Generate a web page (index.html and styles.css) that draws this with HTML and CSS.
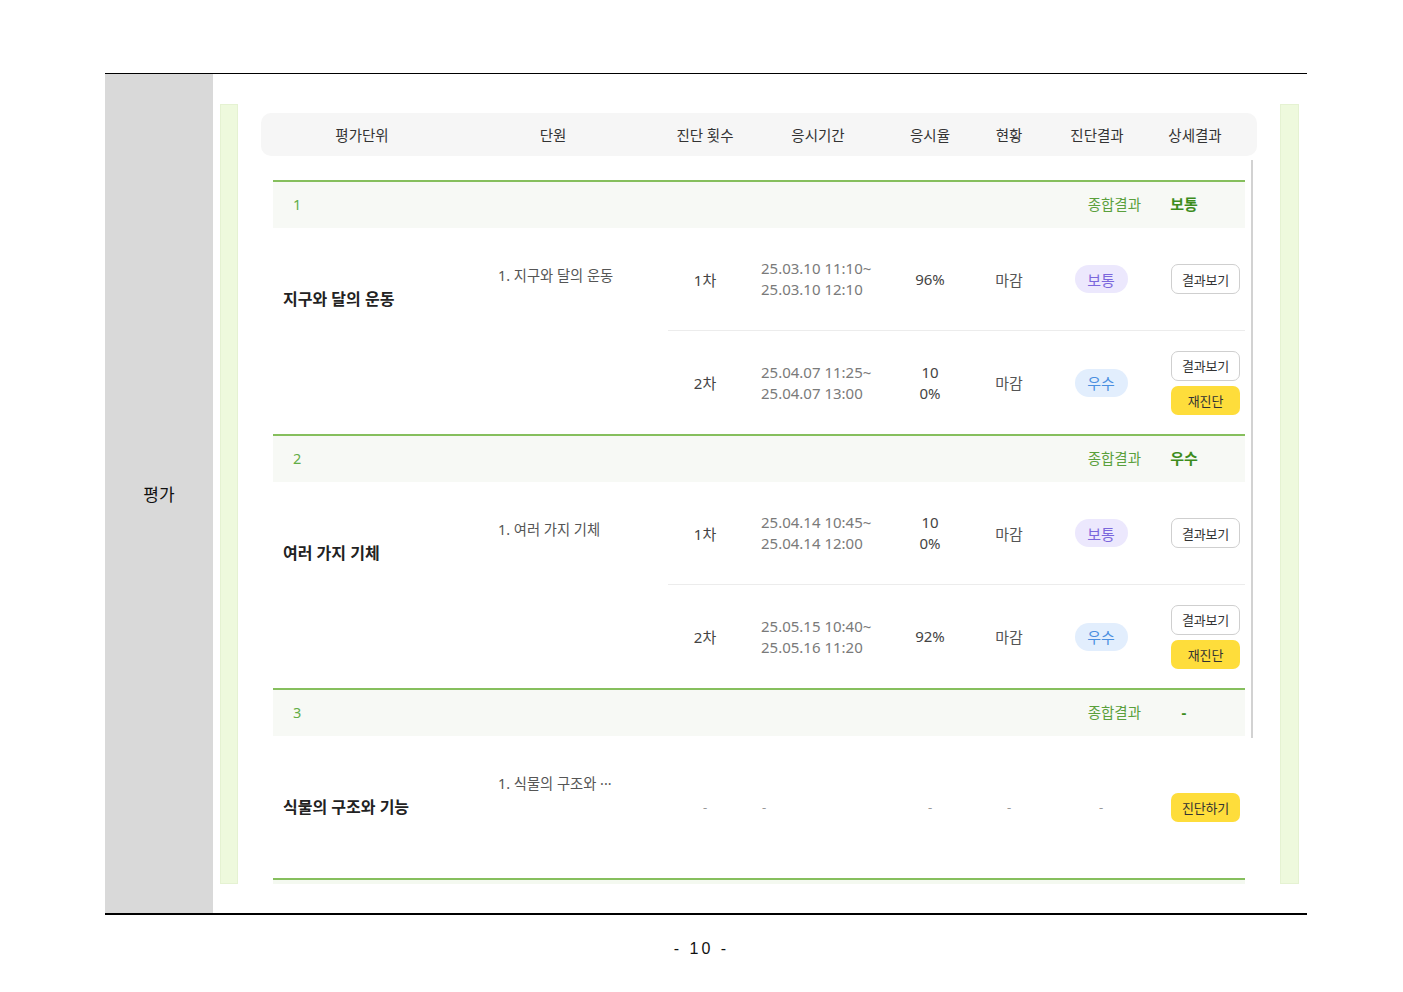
FILE: index.html
```html
<!DOCTYPE html>
<html lang="ko">
<head>
<meta charset="utf-8">
<title>평가</title>
<link rel="stylesheet" href="styles.css">
</head>
<body>
<div class="page">
  <div class="doc-table">
    <div class="label-cell">평가</div>
    <div class="content-cell">
      <div class="shot">
        <div class="strip"></div>
        <div class="main">
          <div class="thead">
            <div class="th">평가단위</div>
            <div class="th">단원</div>
            <div class="th">진단 횟수</div>
            <div class="th">응시기간</div>
            <div class="th">응시율</div>
            <div class="th">현황</div>
            <div class="th">진단결과</div>
            <div class="th">상세결과</div>
          </div>
          <div class="scroll">
            <div class="tbody">
              <section class="group">
                <div class="group-head"><span class="gnum">1</span><span class="glabel">종합결과</span><span class="gval">보통</span></div>
                <div class="group-body">
                  <div class="unit-name">지구와 달의 운동</div>
                  <div class="sub-unit">1. 지구와 달의 운동</div>
                  <div class="rows">
                    <div class="row">
                      <div class="c-round">1차</div>
                      <div class="c-period">25.03.10 11:10~<br>25.03.10 12:10</div>
                      <div class="c-rate">96%</div>
                      <div class="c-status">마감</div>
                      <div class="c-result"><span class="badge normal">보통</span></div>
                      <div class="c-detail"><button class="btn">결과보기</button></div>
                    </div>
                    <div class="row">
                      <div class="c-round">2차</div>
                      <div class="c-period">25.04.07 11:25~<br>25.04.07 13:00</div>
                      <div class="c-rate">10<br>0%</div>
                      <div class="c-status">마감</div>
                      <div class="c-result"><span class="badge good">우수</span></div>
                      <div class="c-detail"><button class="btn">결과보기</button><button class="btn yellow">재진단</button></div>
                    </div>
                  </div>
                </div>
              </section>
              <section class="group">
                <div class="group-head"><span class="gnum">2</span><span class="glabel">종합결과</span><span class="gval">우수</span></div>
                <div class="group-body">
                  <div class="unit-name">여러 가지 기체</div>
                  <div class="sub-unit">1. 여러 가지 기체</div>
                  <div class="rows">
                    <div class="row">
                      <div class="c-round">1차</div>
                      <div class="c-period">25.04.14 10:45~<br>25.04.14 12:00</div>
                      <div class="c-rate">10<br>0%</div>
                      <div class="c-status">마감</div>
                      <div class="c-result"><span class="badge normal">보통</span></div>
                      <div class="c-detail"><button class="btn">결과보기</button></div>
                    </div>
                    <div class="row">
                      <div class="c-round">2차</div>
                      <div class="c-period">25.05.15 10:40~<br>25.05.16 11:20</div>
                      <div class="c-rate">92%</div>
                      <div class="c-status">마감</div>
                      <div class="c-result"><span class="badge good">우수</span></div>
                      <div class="c-detail"><button class="btn">결과보기</button><button class="btn yellow">재진단</button></div>
                    </div>
                  </div>
                </div>
              </section>
              <section class="group">
                <div class="group-head"><span class="gnum">3</span><span class="glabel">종합결과</span><span class="gval">-</span></div>
                <div class="group-body">
                  <div class="unit-name">식물의 구조와 기능</div>
                  <div class="sub-unit">1. 식물의 구조와 ···</div>
                  <div class="rows">
                    <div class="row tall">
                      <div class="c-round dash">-</div>
                      <div class="c-period dash">-</div>
                      <div class="c-rate dash">-</div>
                      <div class="c-status dash">-</div>
                      <div class="c-result dash">-</div>
                      <div class="c-detail"><button class="btn yellow">진단하기</button></div>
                    </div>
                  </div>
                </div>
              </section>
              <div class="group-end"></div>
            </div>
            <div class="scrollbar"></div>
          </div>
        </div>
        <div class="strip"></div>
      </div>
    </div>
  </div>
  <div class="page-num">- 10 -</div>
</div>
</body>
</html>
```

FILE: styles.css
```css
* { box-sizing: border-box; }
html, body { margin: 0; padding: 0; background: #fff; }
body { font-family: "Noto Sans", "Noto Sans CJK KR", sans-serif; color: #333; }

.page { padding-top: 73px; }

.doc-table {
  margin: 0 96px 0 105px;
  display: flex;
  height: 842px;
  border-top: 1px solid #000;
  border-bottom: 2px solid #000;
}

.label-cell {
  width: 108px;
  flex: none;
  background: #d9d9d9;
  display: flex;
  align-items: center;
  justify-content: center;
  font-family: "Noto Sans CJK KR", sans-serif;
  font-size: 17px;
  color: #111;
}

.content-cell {
  flex: 1;
  padding: 30px 8px 0 7px;
}

.shot {
  display: flex;
  height: 780px;
  overflow: hidden;
}

.strip {
  width: 18px;
  flex: none;
  background: #eef9dd;
  border: 1px solid #e5f2d2;
}
.shot .strip:last-child { width: 19px; }

.main {
  width: 1042px;
  flex: none;
  padding-top: 9px;
}

.thead {
  margin: 0 23px;
  height: 43px;
  background: #f6f6f6;
  border-radius: 10px;
  display: grid;
  grid-template-columns: 202px 180px 124px 102px 122px 36px 140px 56px;
  align-items: center;
  padding-bottom: 1px;
}
.th {
  text-align: center;
  white-space: nowrap;
  font-size: 14.5px;
  color: #333;
}

.scroll {
  margin-top: 4px;
  padding-left: 35px;
  display: flex;
}

.tbody {
  width: 972px;
  flex: none;
  padding-top: 20px;
}

.scrollbar {
  margin-left: 6px;
  width: 2px;
  height: 578px;
  background: #d2d2d2;
  flex: none;
}

.group { border-top: 2px solid #86bf5d; }

.group-head {
  height: 46px;
  background: #f7f9f5;
  display: flex;
  align-items: center;
  padding: 0 41px 3px 20px;
  font-size: 14.5px;
}
.gnum { color: #62ad45; flex: 1; }
.glabel { color: #5aa03c; }
.gval {
  width: 40px;
  margin-left: 23px;
  text-align: center;
  font-weight: 700;
  color: #3c8c1c;
  font-size: 15px;
}

.group-body {
  display: grid;
  grid-template-columns: 225px 170px 577px;
  align-items: start;
}

.unit-name {
  height: 140px;
  display: flex;
  align-items: center;
  padding-left: 10px;
  font-weight: 700;
  font-size: 16px;
  color: #222;
}

.sub-unit {
  padding-top: 37px;
  line-height: 22px;
  font-size: 14.3px;
  color: #555;
}

.row {
  height: 103px;
  display: grid;
  grid-template-columns: 74px 138px 100px 58px 126px 81px;
  align-items: center;
  font-size: 15px;
  color: #444;
}
.rows .row:first-child:not(:last-child) { border-bottom: 1px solid #ececec; }
.row.tall { height: 142px; }

.c-round, .c-rate, .c-status, .c-result { text-align: center; }
.c-period {
  padding-left: 19px;
  line-height: 21px;
  color: #7a7a7a;
  white-space: nowrap;
}
.c-rate { line-height: 21px; }
.c-status { color: #555; }
.dash { color: #999; font-size: 13px; }
.c-period.dash { padding-left: 20px; }

.badge {
  display: inline-flex;
  align-items: center;
  justify-content: center;
  width: 53px;
  height: 28px;
  border-radius: 14px;
  font-size: 15px;
}
.badge.normal { background: #ece8fd; color: #7b67dc; }
.badge.good { background: #e2eefd; color: #4a8fe0; }

.c-detail {
  display: flex;
  flex-direction: column;
  align-items: center;
  gap: 5px;
  padding-left: 7px;
  padding-right: 5px;
}

.btn {
  width: 69px;
  height: 30px;
  border: 1px solid #cfcfcf;
  border-radius: 7px;
  background: #fff;
  font-family: "Noto Sans CJK KR", sans-serif;
  font-size: 13px;
  letter-spacing: -0.2px;
  color: #333;
  padding: 0;
}
.btn.yellow {
  height: 29px;
  border: none;
  background: #fedd3b;
  color: #333;
}

.group-end {
  border-top: 2px solid #86bf5d;
  height: 6px;
  background: #f4f9f0;
}

.page-num {
  text-align: center;
  margin-top: 25px;
  font-family: "Liberation Sans", sans-serif;
  font-size: 16px;
  letter-spacing: 3px;
  white-space: pre;
  color: #111;
}
```
